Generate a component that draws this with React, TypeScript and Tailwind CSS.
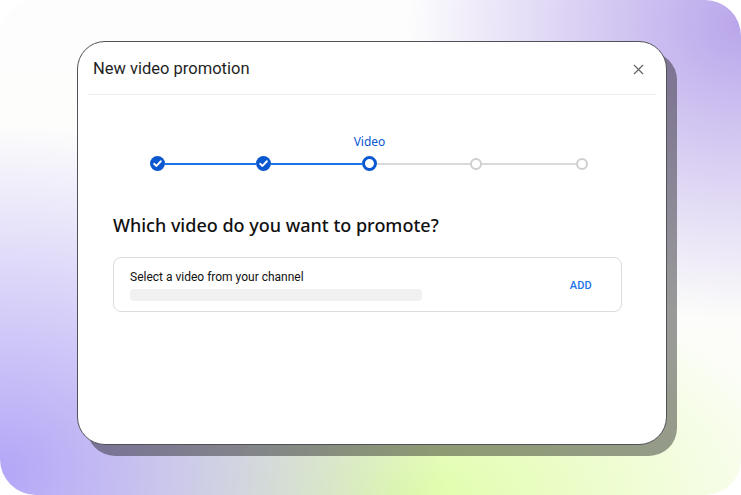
import { X } from "lucide-react"

const Check = () => (
    <svg viewBox="0 0 16 16" className="w-[15px] h-[15px]">
        <circle cx="8" cy="8" r="8" fill="#0b57d0" />
        <path d="M4.4 8.3 L6.9 10.6 L11.6 5.6" fill="none" stroke="#fff" strokeWidth="2" strokeLinecap="round" strokeLinejoin="round" />
    </svg>
)

const Stepper = () => (
    <div className="flex items-center ml-[72px] mt-[61px]">
        <Check />
        <div className="w-[91px] h-[2px] bg-[#1a73e8]" />
        <Check />
        <div className="w-[91px] h-[2px] bg-[#1a73e8]" />
        <div className="relative">
            <div className="w-[15px] h-[15px] rounded-full border-[3px] border-[#0b57d0] bg-white" />
            <span className="absolute left-1/2 -translate-x-1/2 -top-[22px] text-[12px] text-[#0b57d0] font-['Noto_Sans',sans-serif] leading-[16px]">
                Video
            </span>
        </div>
        <div className="w-[93px] h-[2px] bg-[#d9d9d9]" />
        <div className="w-[12px] h-[12px] rounded-full border-[2.5px] border-[#cfcfcf] bg-white" />
        <div className="w-[94px] h-[2px] bg-[#d9d9d9]" />
        <div className="w-[12px] h-[12px] rounded-full border-[2.5px] border-[#cfcfcf] bg-white" />
    </div>
)

export default function App() {
    return (
        <div className="w-[741px] h-[495px] bg-white">
            <div className="w-full h-full rounded-[36px] pl-[77px] pt-[41px] bg-[radial-gradient(ellipse_60%_70%_at_0%_95%,#b3a6f7_0%,rgba(179,166,247,0)_100%),radial-gradient(ellipse_45%_60%_at_100%_5%,#b9a6eb_0%,rgba(185,166,235,0)_100%),radial-gradient(ellipse_55%_45%_at_55%_100%,#e0fda8_0%,rgba(224,253,168,0)_100%),linear-gradient(#fdfdfd,#fcfdf8)]">
                <div className="w-[590px] h-[404px] bg-white rounded-[28px] border-[1.5px] border-[#505257] shadow-[10px_11px_0_rgba(20,20,20,0.42)] font-['Roboto',sans-serif]">
                    <div className="flex items-center justify-between h-[52px] pl-[15px] pr-[19px] pt-[2px]">
                        <h2 className="text-[16.5px] text-[#1f1f1f]">New video promotion</h2>
                        <X className="w-[17px] h-[17px] text-[#606060]" strokeWidth={1.6} />
                    </div>
                    <div className="mx-[10px] h-[1px] bg-[#ececec]" />
                    <Stepper />
                    <h3 className="ml-[35px] mt-[42px] text-[18px] leading-[24px] font-medium text-[#111] font-['Noto_Sans',sans-serif]">
                        Which video do you want to promote?
                    </h3>
                    <div className="ml-[35px] mt-[20px] w-[509px] h-[55px] rounded-[8px] border border-[#dcdcdc] flex items-center justify-between pl-[16px] pr-[29px]">
                        <div className="flex flex-col pt-[1px]">
                            <span className="text-[12px] leading-[16px] text-[#111]">Select a video from your channel</span>
                            <div className="mt-[4px] w-[292px] h-[12px] rounded-[4px] bg-[#f1f1f1]" />
                        </div>
                        <span className="text-[11px] font-medium text-[#1a73e8] tracking-[0.2px] pt-[4px]">ADD</span>
                    </div>
                </div>
            </div>
        </div>
    )
}
